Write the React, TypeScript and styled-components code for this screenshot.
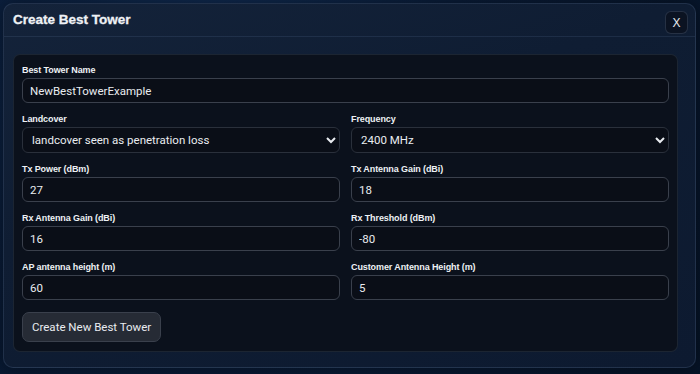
import styled, { createGlobalStyle } from "styled-components";

const GlobalStyle = createGlobalStyle`
  html, body {
    margin: 0;
    padding: 0;
    background: #07152b;
    font-family: Roboto, "Liberation Sans", sans-serif;
    color-scheme: dark;
  }
`;

type Field = { label: string; value: string; options?: string[] };

const rows: Field[][] = [
  [{ label: "Best Tower Name", value: "NewBestTowerExample" }],
  [
    {
      label: "Landcover",
      value: "landcover seen as penetration loss",
      options: ["landcover seen as penetration loss", "ignore landcover"],
    },
    { label: "Frequency", value: "2400 MHz", options: ["2400 MHz", "5800 MHz"] },
  ],
  [
    { label: "Tx Power (dBm)", value: "27" },
    { label: "Tx Antenna Gain (dBi)", value: "18" },
  ],
  [
    { label: "Rx Antenna Gain (dBi)", value: "16" },
    { label: "Rx Threshold (dBm)", value: "-80" },
  ],
  [
    { label: "AP antenna height (m)", value: "60" },
    { label: "Customer Antenna Height (m)", value: "5" },
  ],
];

const App = () => {
  return (
    <Backdrop>
      <GlobalStyle />
      <Modal>
        <Header>
          <Title>Create Best Tower</Title>
          <CloseButton>X</CloseButton>
        </Header>
        <Body>
          <Card>
            {rows.map((row, i) => (
              <Row key={i} $cols={row.length}>
                {row.map((f) => (
                  <FieldBox key={f.label}>
                    <Label>{f.label}</Label>
                    {f.options ? (
                      <Select defaultValue={f.value}>
                        {f.options.map((o) => (
                          <option key={o}>{o}</option>
                        ))}
                      </Select>
                    ) : (
                      <Input defaultValue={f.value} />
                    )}
                  </FieldBox>
                ))}
              </Row>
            ))}
            <SubmitButton>Create New Best Tower</SubmitButton>
          </Card>
        </Body>
      </Modal>
    </Backdrop>
  );
};

export default App;

const Backdrop = styled.div`
  width: 700px;
  height: 374px;
  box-sizing: border-box;
  padding: 3px 4px 6px 3px;
  background: radial-gradient(circle at 30% 20%, #12305a 0%, #0a1d3a 45%, #061428 100%);
`;

const Modal = styled.div`
  height: 100%;
  box-sizing: border-box;
  display: flex;
  flex-direction: column;
  border: 1px solid rgba(120, 150, 190, 0.18);
  border-radius: 10px;
  background: linear-gradient(160deg, #14233a 0%, #0f1d33 40%, #0d1a30 100%);
  box-shadow: 0 0 20px rgba(0, 0, 0, 0.5);
`;

const Header = styled.div`
  height: 32px;
  display: flex;
  align-items: center;
  justify-content: space-between;
  padding: 0 7px 0 9px;
  border-bottom: 1px solid rgba(120, 150, 190, 0.14);
`;

const Title = styled.h2`
  margin: 0;
  font-family: "Liberation Sans", Arial, sans-serif;
  font-size: 13.5px;
  font-weight: 700;
  color: #eef1f5;
  padding-bottom: 1px;
  -webkit-text-stroke: 0.3px #eef1f5;
`;

const CloseButton = styled.button`
  width: 23px;
  height: 23px;
  margin-top: 5px;
  border-radius: 6px;
  border: 1px solid rgba(120, 140, 170, 0.25);
  background: #0b1322;
  color: #e6e9ee;
  font-family: "Liberation Sans", Arial, sans-serif;
  font-size: 12px;
  padding: 0;
  cursor: pointer;
`;

const Body = styled.div`
  padding: 17px 17px 0 9px;
`;

const Card = styled.div`
  display: flex;
  flex-direction: column;
  align-items: flex-start;
  gap: 11px;
  padding: 10px 8px 9px 8px;
  border: 1px solid rgba(120, 140, 170, 0.16);
  border-radius: 7px;
  background: #0b111c;
`;

const Row = styled.div<{ $cols: number }>`
  width: 100%;
  display: grid;
  grid-template-columns: repeat(${(p) => p.$cols}, 1fr);
  column-gap: 11px;
`;

const FieldBox = styled.div`
  display: flex;
  flex-direction: column;
  gap: 2px;
`;

const Label = styled.label`
  font-family: "Liberation Sans", sans-serif;
  font-size: 9px;
  line-height: 11px;
  font-weight: 700;
  color: #eef1f5;
  letter-spacing: -0.1px;
`;

const Input = styled.input`
  height: 25px;
  box-sizing: border-box;
  width: 100%;
  padding: 0 7px;
  border-radius: 6px;
  border: 1px solid #3a404c;
  background: #0a0e17;
  color: #e9ecf0;
  font-family: Roboto, sans-serif;
  font-size: 11.5px;
  outline: none;
`;

const Select = styled.select`
  height: 26px;
  box-sizing: border-box;
  width: 100%;
  padding: 0 3px 0 5px;
  border-radius: 6px;
  border: 1px solid #2a303b;
  background: #0a0e17;
  color: #e9ecf0;
  font-family: Roboto, sans-serif;
  font-size: 11.5px;
  outline: none;
`;

const SubmitButton = styled.button`
  margin-top: 1px;
  height: 30px;
  padding: 0 9px;
  border-radius: 7px;
  border: 1px solid #3a404c;
  background: #262b35;
  color: #e9ecf0;
  font-family: Roboto, sans-serif;
  font-size: 11.5px;
  cursor: pointer;
`;
